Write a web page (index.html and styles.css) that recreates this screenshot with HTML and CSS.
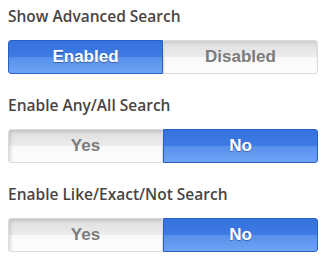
FILE: index.html
```html
<html lang="en">
  <head>
    <title>Search Options</title>
    <link rel="stylesheet" href="styles.css">
  </head>
  <body class="container">
    <div class="option">
      <h3 class="option-title">Show Advanced Search</h3>
      <div class="toggle">
        <button type="button" class="toggle-btn active">Enabled</button>
        <button type="button" class="toggle-btn">Disabled</button>
      </div>
    </div>
    <div class="option">
      <h3 class="option-title">Enable Any/All Search</h3>
      <div class="toggle">
        <button type="button" class="toggle-btn">Yes</button>
        <button type="button" class="toggle-btn active">No</button>
      </div>
    </div>
    <div class="option">
      <h3 class="option-title">Enable Like/Exact/Not Search</h3>
      <div class="toggle">
        <button type="button" class="toggle-btn">Yes</button>
        <button type="button" class="toggle-btn active">No</button>
      </div>
    </div>
  </body>
</html>
```

FILE: styles.css
```css
body {
  margin: 0;
  background: #fff;
}
.container {
  display: flex;
  flex-direction: column;
  padding: 5px 13px 0 8px;
}
.option {
  margin-bottom: 20px;
}
.option-title {
  margin: 0 0 12px 0;
  font-family: "Open Sans", sans-serif;
  font-weight: 600;
  font-size: 15.5px;
  line-height: 23px;
  color: #4a4542;
}
.toggle {
  display: flex;
  height: 34px;
}
.toggle-btn {
  flex: 1;
  margin: 0;
  padding: 0;
  font-family: "Liberation Sans", Arial, sans-serif;
  font-weight: bold;
  font-size: 17px;
  color: #7b7b7b;
  border: 1px solid #dcdcdc;
  background: linear-gradient(#dedede, #ececec 48%, #fafafa 52%, #fdfdfd);
  box-shadow: inset 2px 2px 3px rgba(0, 0, 0, 0.12);
  border-radius: 3px 0 0 3px;
}
.toggle-btn + .toggle-btn {
  border-radius: 0 3px 3px 0;
  box-shadow: inset 0 2px 3px rgba(0, 0, 0, 0.08);
}
.toggle-btn.active {
  color: #fff;
  border: 1px solid #2a5fc4;
  background: linear-gradient(#3572dd, #3d7ae3 48%, #5890ec 52%, #6ea3f5);
  box-shadow: none;
  text-shadow: 0 1px 1px rgba(0, 0, 0, 0.35);
}
```
